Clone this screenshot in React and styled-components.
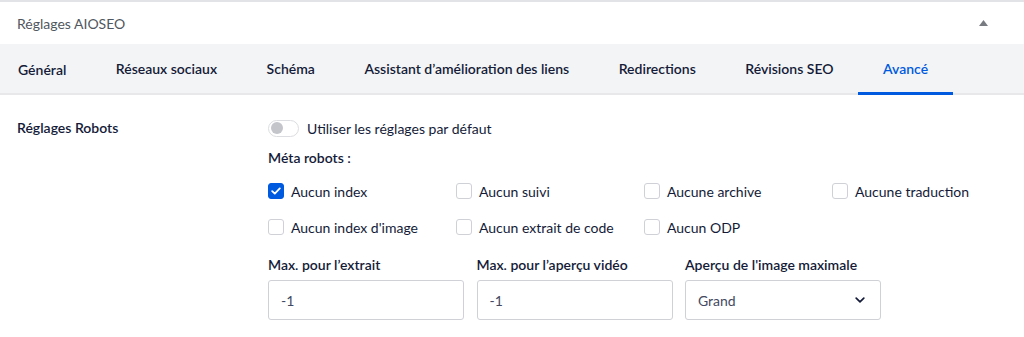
import React from "react";
import styled, { createGlobalStyle } from "styled-components";

const Global = createGlobalStyle`
  html, body { margin: 0; padding: 0; background: #fff; }
  body { font-family: "Lato", "Liberation Sans", sans-serif; color: #141b38; }
  * { box-sizing: border-box; }
`;

const Panel = styled.div`
  width: 1024px;
  border-top: 2px solid #e2e3e6;
  background: #fff;
`;

const Header = styled.div`
  height: 42px;
  display: flex;
  align-items: center;
  justify-content: space-between;
  padding: 0 36px 0 17px;
  font-size: 14px;
  color: #50575e;
`;

const Tabs = styled.div`
  height: 51px;
  display: flex;
  background: #f3f4f5;
  border-bottom: 2px solid #e8e8eb;
`;

const Tab = styled.div`
  height: 51px;
  margin-bottom: -2px;
  padding: 3px ${(p) => (p.$first ? "24.75px 0 18px" : "24.75px")};
  display: flex;
  align-items: center;
  font-size: 14px;
  font-weight: 600;
  color: ${(p) => (p.$active ? "#005ae0" : "#141b38")};
  border-bottom: 3px solid ${(p) => (p.$active ? "#005ae0" : "transparent")};
  white-space: nowrap;
`;

const Content = styled.div`
  display: flex;
  padding: 24px 17px 17px;
`;

const RowLabel = styled.div`
  width: 251px;
  flex: none;
  font-size: 14px;
  font-weight: 600;
  line-height: 18px;
`;

const Main = styled.div`
  display: flex;
  flex-direction: column;
`;

const ToggleRow = styled.div`
  display: flex;
  align-items: center;
  gap: 8px;
  height: 18px;
  font-size: 14px;
  color: #141b38;
`;

const Switch = styled.div`
  width: 31px;
  height: 17px;
  border: 1px solid #dcdde0;
  border-radius: 9px;
  background: #fff;
  display: flex;
  align-items: center;
  padding-left: 2px;
`;

const Knob = styled.div`
  width: 12px;
  height: 12px;
  border-radius: 50%;
  background: #c3c5cb;
`;

const SubTitle = styled.div`
  margin-top: 12px;
  font-size: 14px;
  font-weight: 600;
  line-height: 18px;
`;

const CheckGrid = styled.div`
  margin-top: 14px;
  display: grid;
  grid-template-columns: repeat(4, 188px);
  row-gap: 16px;
`;

const CheckItem = styled.label`
  display: flex;
  align-items: center;
  gap: 7px;
  height: 20px;
  font-size: 14px;
  color: #141b38;
`;

const Box = styled.span`
  width: 16px;
  height: 16px;
  border-radius: 3px;
  flex: none;
  display: flex;
  align-items: center;
  justify-content: center;
  background: ${(p) => (p.$checked ? "#005ae0" : "#fff")};
  border: 1px solid ${(p) => (p.$checked ? "#005ae0" : "#d0d1d7")};
`;

const Fields = styled.div`
  margin-top: 19px;
  display: grid;
  grid-template-columns: repeat(3, 196px);
  column-gap: 12.5px;
`;

const Field = styled.div`
  display: flex;
  flex-direction: column;
  gap: 6px;
`;

const FieldLabel = styled.div`
  font-size: 14px;
  font-weight: 600;
  line-height: 18px;
`;

const InputBox = styled.div`
  height: 40px;
  border: 1px solid #d0d1d7;
  border-radius: 3px;
  display: flex;
  align-items: center;
  justify-content: space-between;
  padding: 0 15px 0 12px;
  font-size: 14px;
  color: #434960;
`;

const Check = () => (
  <svg width="10" height="8" viewBox="0 0 10 8">
    <path d="M1.2 4.2 L3.8 6.6 L8.8 1.4" fill="none" stroke="#fff" strokeWidth="1.8" strokeLinecap="round" strokeLinejoin="round" />
  </svg>
);

const Chevron = () => (
  <svg width="10" height="6" viewBox="0 0 10 6">
    <path d="M1.2 1.2 L5 4.8 L8.8 1.2" fill="none" stroke="#141b38" strokeWidth="1.7" strokeLinecap="round" strokeLinejoin="round" />
  </svg>
);

const Caret = () => (
  <svg width="9" height="6" viewBox="0 0 9 6">
    <path d="M0 6 L4.5 0 L9 6 Z" fill="#787c82" />
  </svg>
);

const tabs = [
  "Général",
  "Réseaux sociaux",
  "Schéma",
  "Assistant d’amélioration des liens",
  "Redirections",
  "Révisions SEO",
  "Avancé",
];

const checks = [
  ["Aucun index", true],
  ["Aucun suivi", false],
  ["Aucune archive", false],
  ["Aucune traduction", false],
  ["Aucun index d'image", false],
  ["Aucun extrait de code", false],
  ["Aucun ODP", false],
];

export default function App() {
  return (
    <>
      <Global />
      <Panel>
        <Header>
          <span>Réglages AIOSEO</span>
          <Caret />
        </Header>
        <Tabs>
          {tabs.map((t, i) => (
            <Tab key={t} $first={i === 0} $active={t === "Avancé"}>
              {t}
            </Tab>
          ))}
        </Tabs>
        <Content>
          <RowLabel>Réglages Robots</RowLabel>
          <Main>
            <ToggleRow>
              <Switch>
                <Knob />
              </Switch>
              Utiliser les réglages par défaut
            </ToggleRow>
            <SubTitle>Méta robots :</SubTitle>
            <CheckGrid>
              {checks.map(([label, on]) => (
                <CheckItem key={label}>
                  <Box $checked={on}>{on && <Check />}</Box>
                  {label}
                </CheckItem>
              ))}
            </CheckGrid>
            <Fields>
              <Field>
                <FieldLabel>Max. pour l’extrait</FieldLabel>
                <InputBox>-1</InputBox>
              </Field>
              <Field>
                <FieldLabel>Max. pour l’aperçu vidéo</FieldLabel>
                <InputBox>-1</InputBox>
              </Field>
              <Field>
                <FieldLabel>Aperçu de l'image maximale</FieldLabel>
                <InputBox>
                  Grand
                  <Chevron />
                </InputBox>
              </Field>
            </Fields>
          </Main>
        </Content>
      </Panel>
    </>
  );
}
